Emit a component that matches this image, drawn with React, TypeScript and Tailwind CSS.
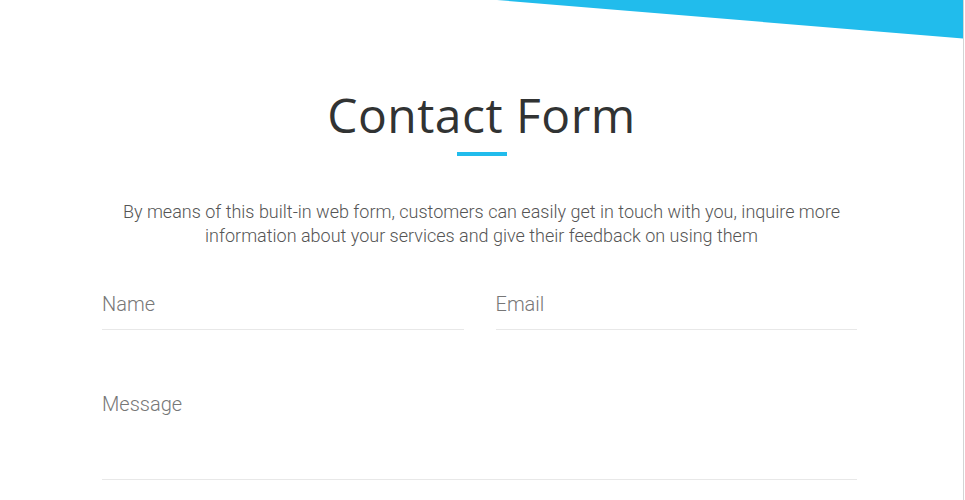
import React from "react";

export default function App() {
  return (
    <div className="relative w-[964px] h-[500px] overflow-hidden bg-white border-r border-[#d4d4d4]">
      <svg
        className="absolute top-0 right-0"
        width="466"
        height="39"
        viewBox="0 0 466 39"
        preserveAspectRatio="none"
      >
        <polygon points="0,0 466,0 466,38.5" fill="#21bcec" />
      </svg>
      <div className="flex flex-col items-center pt-[86px]">
        <h1
          className="text-[48px] leading-[58px] text-[#313333] tracking-[0.5px]"
          style={{ fontFamily: '"Open Sans", sans-serif' }}
        >
          Contact Form
        </h1>
        <div className="mt-[8px] w-[50px] h-[4px] bg-[#21bcec]" />
        <p
          className="mt-[44px] w-[780px] text-center text-[18px] leading-[24px] font-light text-[#555]"
          style={{ fontFamily: 'Roboto, sans-serif' }}
        >
          By means of this built-in web form, customers can easily get in touch with you, inquire more
          information about your services and give their feedback on using them
        </p>
      </div>
      <div
        className="ml-[102px] w-[755px] mt-[34px] flex flex-col gap-[30px]"
        style={{ fontFamily: 'Roboto, sans-serif' }}
      >
        <div className="grid grid-cols-2 gap-[32px]">
          <div className="h-[48px] border-b border-[#e8e8e8] pt-[7px] text-[20px] font-light text-[#777]">
            Name
          </div>
          <div className="h-[48px] border-b border-[#e8e8e8] pt-[7px] text-[20px] font-light text-[#777]">
            Email
          </div>
        </div>
        <div className="h-[120px] border-b border-[#e8e8e8] pt-[29px] text-[20px] font-light text-[#777]">
          Message
        </div>
      </div>
    </div>
  );
}
